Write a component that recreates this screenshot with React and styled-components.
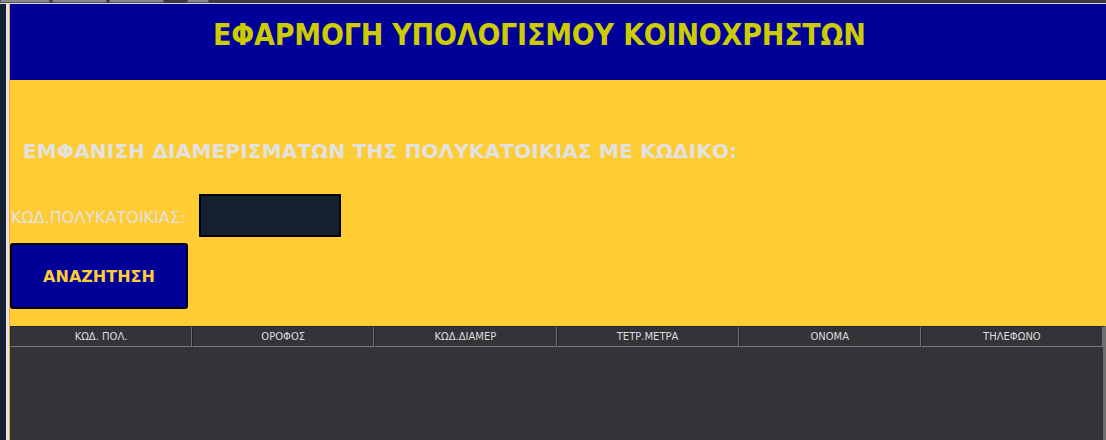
import React from 'react';
import styled, { createGlobalStyle } from 'styled-components';

const columns = [
  'ΚΩΔ. ΠΟΛ.',
  'ΟΡΟΦΟΣ',
  'ΚΩΔ.ΔΙΑΜΕΡ',
  'ΤΕΤΡ.ΜΕΤΡΑ',
  'ΟΝΟΜΑ',
  'ΤΗΛΕΦΩΝΟ',
];

const tabs = [50, 55, 55];

export default function App() {
  return (
    <>
      <GlobalStyle />
      <Page>
        <TopStrip>
          {tabs.map((w, i) => (
            <Tab key={i} $width={w} />
          ))}
          <Tab $width={22} $offset={21} />
        </TopStrip>
        <Body>
          <LeftEdge />
          <Main>
            <Header>
              <Title>ΕΦΑΡΜΟΓΗ ΥΠΟΛΟΓΙΣΜΟΥ ΚΟΙΝΟΧΡΗΣΤΩΝ</Title>
            </Header>
            <Panel>
              <Subtitle>ΕΜΦΑΝΙΣΗ ΔΙΑΜΕΡΙΣΜΑΤΩΝ ΤΗΣ ΠΟΛΥΚΑΤΟΙΚΙΑΣ ΜΕ ΚΩΔΙΚΟ:</Subtitle>
              <FieldRow>
                <Label>ΚΩΔ.ΠΟΛΥΚΑΤΟΙΚΙΑΣ:</Label>
                <Input type="text" />
              </FieldRow>
              <SearchButton>ΑΝΑΖΗΤΗΣΗ</SearchButton>
            </Panel>
            <Table>
              <HeadRow>
                {columns.map((c) => (
                  <HeadCell key={c}>{c}</HeadCell>
                ))}
              </HeadRow>
              <TableBody />
            </Table>
          </Main>
        </Body>
      </Page>
    </>
  );
}

const GlobalStyle = createGlobalStyle`
  html, body {
    margin: 0;
    padding: 0;
    background: #333338;
    overflow: hidden;
  }
`;

const Page = styled.div`
  width: 1106px;
  height: 440px;
  display: flex;
  flex-direction: column;
`;

const TopStrip = styled.div`
  height: 3px;
  display: flex;
  gap: 2px;
  background: #3a3a3a;
  border-bottom: 1px solid #d8d8e8;
`;

const Tab = styled.div`
  width: ${(p) => p.$width}px;
  margin-left: ${(p) => p.$offset || 0}px;
  height: 3px;
  background: #8a8a8a;
  border: 1px solid #555;
  border-top: none;
  box-sizing: border-box;
`;

const Body = styled.div`
  flex: 1;
  display: flex;
  min-height: 0;
`;

const LeftEdge = styled.div`
  width: 6px;
  background: #14202f;
  border-right: 3px solid #e2e2f2;
`;

const Main = styled.div`
  flex: 1;
  display: flex;
  flex-direction: column;
  border-left: 1px solid #f5a623;
  min-width: 0;
`;

const Header = styled.div`
  height: 76px;
  background: #000099;
  box-sizing: border-box;
  padding: 13px 0 0 203px;
`;

const Title = styled.h1`
  margin: 0;
  font-family: 'DejaVu Sans Condensed', 'DejaVu Sans', sans-serif;
  font-weight: bold;
  font-size: 30px;
  letter-spacing: -0.2px;
  line-height: 36px;
  color: #cccc00;
  white-space: nowrap;
`;

const Panel = styled.div`
  height: 246px;
  background: #ffcc33;
  box-sizing: border-box;
  padding: 58px 0 0 0;
  display: flex;
  flex-direction: column;
  align-items: flex-start;
`;

const Subtitle = styled.h2`
  margin: 0 0 0 13px;
  font-family: 'DejaVu Sans', Verdana, sans-serif;
  font-weight: bold;
  font-size: 20px;
  letter-spacing: 0.2px;
  line-height: 26px;
  color: #e2e2e2;
  white-space: nowrap;
`;

const FieldRow = styled.div`
  display: flex;
  align-items: center;
  gap: 14px;
  margin-top: 30px;
`;

const Label = styled.label`
  font-family: 'DejaVu Sans', sans-serif;
  font-size: 16px;
  color: #e2e2e2;
  margin-left: 1px;
  padding-top: 3px;
`;

const Input = styled.input`
  width: 142px;
  height: 43px;
  box-sizing: border-box;
  background: #141f30;
  border: 2px solid #000;
  outline: none;
  color: #fff;
`;

const SearchButton = styled.button`
  margin-top: 6px;
  width: 178px;
  height: 66px;
  box-sizing: border-box;
  background: #000099;
  border: 2px solid #000;
  border-radius: 3px;
  color: #ffcc33;
  font-family: 'DejaVu Sans', sans-serif;
  font-weight: bold;
  font-size: 16px;
  padding: 0;
  cursor: pointer;
`;

const Table = styled.div`
  flex: 1;
  display: flex;
  flex-direction: column;
  background: #333338;
  border-top: 1px solid #1f2733;
  border-right: 3px solid #6f6f6f;
`;

const HeadRow = styled.div`
  display: grid;
  grid-template-columns: repeat(6, 1fr);
  height: 20px;
`;

const HeadCell = styled.div`
  display: flex;
  align-items: center;
  justify-content: center;
  box-sizing: border-box;
  border-left: 1px solid #1f2733;
  border-right: 1px solid #6f6f6f;
  border-bottom: 1px solid #7a7a7a;
  font-family: 'DejaVu Sans', sans-serif;
  font-size: 10px;
  color: #dcdcdc;
  background: #333338;
`;

const TableBody = styled.div`
  flex: 1;
`;
